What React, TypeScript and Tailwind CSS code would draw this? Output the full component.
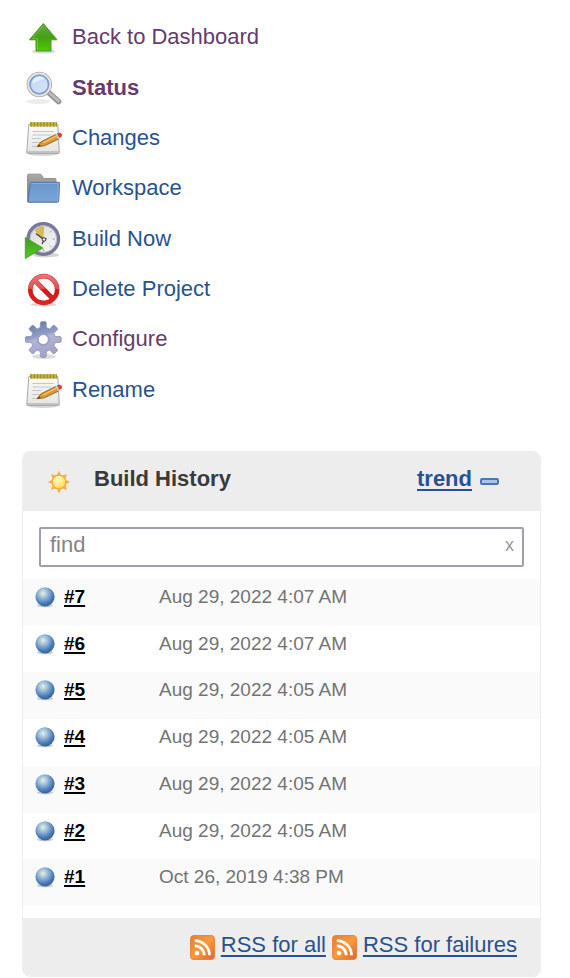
import type { ReactNode } from 'react';

function Icon({ children }: { children: ReactNode }) {
  return (
    <svg viewBox="0 0 38 38" className="size-[38px] shrink-0 overflow-visible" aria-hidden="true">
      {children}
    </svg>
  );
}

function UpIcon() {
  return (
    <Icon>
      <ellipse cx="19.5" cy="33.5" rx="12" ry="2" fill="#d9d9d9" />
      <path d="M19.3 5.5 33 21.8H27V33H12V21.8H5.5Z" fill="url(#up)" stroke="#4a9a1c" strokeWidth="1" strokeLinejoin="round" />
      <path d="M13.5 31.5V20.5H8.5L19.3 7.6" fill="none" stroke="#8fd05f" strokeWidth="1" opacity="0.5" />
    </Icon>
  );
}

function SearchIcon() {
  return (
    <Icon>
      <ellipse cx="14" cy="32.5" rx="12" ry="2.6" fill="#ececec" />
      <path d="m24 23 10.5 9.5" stroke="#929292" strokeWidth="5.6" strokeLinecap="round" />
      <path d="m26 24.5 8.5 7.5" stroke="#bdbdbd" strokeWidth="2.6" strokeLinecap="round" />
      <circle cx="15.3" cy="15.5" r="11" fill="url(#lens)" stroke="#a6a8a5" strokeWidth="3.4" />
      <circle cx="15.3" cy="15.5" r="11" fill="none" stroke="#e6e7e4" strokeWidth="1.8" />
      <circle cx="15.3" cy="15.5" r="9.2" fill="none" stroke="#7b9fd0" strokeWidth="1.5" />
      <path d="M8.5 15a7 7 0 0 1 12-5.2c-3 1-8.5 3-12 5.2Z" fill="#eef5fd" opacity="0.8" />
    </Icon>
  );
}

function NotepadIcon() {
  return (
    <Icon>
      <ellipse cx="19" cy="35.5" rx="14" ry="1.4" fill="#d6d6d6" />
      <path d="M4.8 5.5h29l1.5 28q0 1-1 1H3.7q-1 0-1-1Z" fill="url(#paper)" stroke="#a9a9a6" strokeWidth="1" />
      <path d="M3 33h32" stroke="#b4b4b2" strokeWidth="1.4" />
      <path d="M8.5 12.5h21M8.5 16h19M8 19.5h9M8 23.5h14M8 27.5h5" stroke="#c6c6c4" strokeWidth="1.2" />
      <path d="M6 5.4h27" stroke="#c5b047" strokeWidth="4.4" />
      <path d="M6.5 5.4H33" stroke="#a08e2c" strokeWidth="4.4" strokeDasharray="1.3 1.9" />
      <path d="m13 27.8 4-5L31.500 15.500l3 4.600-14 6.700Z" fill="#d99a35" stroke="#9a6519" strokeWidth="0.9" strokeLinejoin="round" />
      <path d="m19 24 13.500-7" stroke="#f3c673" strokeWidth="1.2" />
      <path d="m13 27.800 2-2.600 1.900 1.900Z" fill="#5c4526" />
      <path d="m31.300 15.700 1.700-.9 2.600 4.400-1.700.9Z" fill="#c9c9c9" />
      <path d="M32.800 14.300c2.200-1.200 4.500-.7 5.100.9.500 1.500-.2 2.900-2.400 3.900Z" fill="#dd4437" />
    </Icon>
  );
}

function FolderIcon() {
  return (
    <Icon>
      <path d="M3.500 33V6.500Q3.500 5.200 4.800 5.200h11.400q1 0 1.500 1l1.800 3.300h11.500q1 0 1 1V33Z" fill="url(#back)" stroke="#828282" strokeWidth="0.8" />
      <path d="M7.300 13.300h27.600q.8 0 .7 1L34.700 32q-.1 1.200-1.200 1.200H5q-1 0-.9-1.200L6.300 14.300q.1-1 1-1Z" fill="url(#folder)" stroke="#4d7ab2" strokeWidth="1" />
      <path d="M7.500 14.500h26.800l-.9 17.300" fill="none" stroke="#8fb1da" strokeWidth="0.9" />
    </Icon>
  );
}

function BuildIcon() {
  return (
    <Icon>
      <ellipse cx="22" cy="35" rx="13" ry="2.500" fill="#d5d5d5" />
      <circle cx="19.300" cy="19" r="15.200" fill="url(#clock)" stroke="#77779a" strokeWidth="3.400" />
      <circle cx="19.300" cy="19" r="13.300" fill="none" stroke="#bcbccb" strokeWidth="1" />
      <path d="M19.300 7v2.300M31 19h-2.300M27.600 10.700 26 12.300M27.600 27.300 26 25.700M19.300 31v-2.300" stroke="#9c9c9c" strokeWidth="1" />
      <path d="m19 18.500-8-8.300Q14.500 7 19.300 7Z" fill="#d9bc4c" stroke="#c0a94f" strokeWidth="0.700" />
      <path d="m12 13.500 7.500 5.800 3-.6M20 20l-2 4" fill="none" stroke="#3d3d3d" strokeWidth="1.300" />
      <circle cx="20" cy="19.500" r="1.800" fill="#eee" stroke="#333" />
      <path d="M1.300 17.500 18.800 28 1.300 38.500Z" fill="url(#play)" stroke="#459c20" strokeWidth="0.900" strokeLinejoin="round" />
    </Icon>
  );
}

function DeleteIcon() {
  return (
    <Icon>
      <ellipse cx="19.700" cy="34.500" rx="13" ry="1.800" fill="#d4d4d4" />
      <circle cx="19.700" cy="19.500" r="13.400" fill="#fff" stroke="#c93030" strokeWidth="4.600" />
      <path d="m10.500 10.300 18.400 18.400" stroke="#c93030" strokeWidth="4.800" />
      <circle cx="19.700" cy="19.500" r="13.400" fill="none" stroke="url(#stop)" strokeWidth="3.800" />
      <path d="m10.300 10.100 18.800 18.800" stroke="url(#stop)" strokeWidth="4" />
    </Icon>
  );
}

const gearPath = Array.from({ length: 8 }, (_, tooth) => {
  const points = [
    [-14, 12.3],
    [-10, 17],
    [-7, 18],
    [7, 18],
    [10, 17],
    [14, 12.3],
  ];
  return points
    .map(([offset, radius]) => {
      const angle = ((tooth * 45 + offset) * Math.PI) / 180;
      return `${(19.3 + radius * Math.sin(angle)).toFixed(2)} ${(19.5 - radius * Math.cos(angle)).toFixed(2)}`;
    })
    .join('L');
}).join('L');

function GearIcon() {
  return (
    <Icon>
      <ellipse cx="20" cy="36.500" rx="12" ry="2.400" fill="#dcdcdc" />
      <path
        d={`M${gearPath}ZM24.300 19.500a5 5 0 1 0-10 0a5 5 0 1 0 10 0Z`}
        fill="url(#gear)"
        fillRule="evenodd"
        stroke="#8a91b3"
        strokeWidth="0.800"
        strokeLinejoin="round"
      />
      <circle cx="19.300" cy="19.500" r="6" fill="none" stroke="#93a0c4" strokeWidth="1" />
    </Icon>
  );
}

function SunIcon() {
  const rays = [0, 45, 90, 135, 180, 225, 270, 315];
  return (
    <svg viewBox="0 0 24 24" className="size-6 shrink-0" aria-hidden="true">
      {rays.map((angle) => (
        <path key={angle} d="M12 .8 14.600 5.800H9.400Z" fill="#f9ae4b" transform={`rotate(${angle} 12 12)`} />
      ))}
      <circle cx="12" cy="12" r="6.800" fill="url(#sun)" stroke="#f5a840" strokeWidth="1.200" />
    </svg>
  );
}

function BallIcon() {
  return (
    <svg viewBox="0 0 22 22" className="size-[22px] shrink-0" role="img" aria-label="Success">
      <ellipse cx="11" cy="19.500" rx="8" ry="1.800" fill="#c9c9c9" />
      <circle cx="11" cy="10.800" r="9.600" fill="url(#ball)" />
    </svg>
  );
}

function RssIcon() {
  return (
    <svg viewBox="0 0 26 26" className="size-[25px] shrink-0" aria-hidden="true">
      <rect x="0.500" y="0.500" width="25" height="25" rx="3.500" fill="url(#rss)" stroke="#e5843e" />
      <circle cx="7.300" cy="18.800" r="2.400" fill="#fff" />
      <path d="M5 11.300a9.800 9.800 0 0 1 9.800 9.800M5 5.800a15.300 15.300 0 0 1 15.300 15.300" fill="none" stroke="#fff" strokeWidth="2.800" />
    </svg>
  );
}

function Gradients() {
  return (
    <svg className="absolute size-0" aria-hidden="true">
      <defs>
        <linearGradient id="up" x1="0" y1="0" x2="0" y2="1">
          <stop offset="0" stopColor="#6cab47" />
          <stop offset="0.500" stopColor="#42a014" />
          <stop offset="1" stopColor="#4fca0a" />
        </linearGradient>
        <linearGradient id="lens" x1="0" y1="0" x2="1" y2="1">
          <stop offset="0" stopColor="#bad3f1" />
          <stop offset="1" stopColor="#dce9f8" />
        </linearGradient>
        <linearGradient id="paper" x1="0" y1="0" x2="0" y2="1">
          <stop offset="0" stopColor="#fafafa" />
          <stop offset="1" stopColor="#e4e4e2" />
        </linearGradient>
        <linearGradient id="back" x1="0" y1="0" x2="0" y2="1">
          <stop offset="0" stopColor="#aaa" />
          <stop offset="1" stopColor="#707070" />
        </linearGradient>
        <linearGradient id="folder" x1="0" y1="0" x2="0" y2="1">
          <stop offset="0" stopColor="#6795cb" />
          <stop offset="1" stopColor="#7ba4d7" />
        </linearGradient>
        <linearGradient id="clock" x1="0" y1="0" x2="1" y2="1">
          <stop offset="0" stopColor="#d6d6d4" />
          <stop offset="1" stopColor="#fafafa" />
        </linearGradient>
        <linearGradient id="play" x1="0" y1="0" x2="0" y2="1">
          <stop offset="0" stopColor="#3d9e1d" />
          <stop offset="1" stopColor="#58c52b" />
        </linearGradient>
        <linearGradient id="stop" gradientUnits="userSpaceOnUse" x1="0" y1="4" x2="0" y2="34">
          <stop offset="0" stopColor="#ea7878" />
          <stop offset="0.480" stopColor="#e25050" />
          <stop offset="0.520" stopColor="#d41717" />
          <stop offset="1" stopColor="#da2424" />
        </linearGradient>
        <linearGradient id="gear" x1="0" y1="0" x2="0.300" y2="1">
          <stop offset="0" stopColor="#5b78a8" />
          <stop offset="0.450" stopColor="#8c9bc3" />
          <stop offset="0.550" stopColor="#b3b5d8" />
          <stop offset="1" stopColor="#a3a2c4" />
        </linearGradient>
        <radialGradient id="sun" cx="0.400" cy="0.350" r="0.700">
          <stop offset="0" stopColor="#fffbc4" />
          <stop offset="1" stopColor="#fcdb4b" />
        </radialGradient>
        <radialGradient id="ball" cx="0.400" cy="0.320" r="0.700">
          <stop offset="0" stopColor="#e6f0e6" />
          <stop offset="0.350" stopColor="#9bbbd6" />
          <stop offset="0.750" stopColor="#4a7bb8" />
          <stop offset="1" stopColor="#30609f" />
        </radialGradient>
        <linearGradient id="rss" x1="0" y1="0" x2="1" y2="1">
          <stop offset="0" stopColor="#e67c33" />
          <stop offset="0.500" stopColor="#f99a3c" />
          <stop offset="1" stopColor="#dc6530" />
        </linearGradient>
      </defs>
    </svg>
  );
}

const tasks = [
  { label: 'Back to Dashboard', icon: <UpIcon />, style: 'text-[#633c6d]' },
  { label: 'Status', icon: <SearchIcon />, style: 'font-bold text-[#633c6d]' },
  { label: 'Changes', icon: <NotepadIcon />, style: 'text-[#28528f]' },
  { label: 'Workspace', icon: <FolderIcon />, style: 'text-[#28528f]' },
  { label: 'Build Now', icon: <BuildIcon />, style: 'text-[#28528f]' },
  { label: 'Delete Project', icon: <DeleteIcon />, style: 'text-[#28528f]' },
  { label: 'Configure', icon: <GearIcon />, style: 'text-[#633c6d]' },
  { label: 'Rename', icon: <NotepadIcon />, style: 'text-[#28528f]' },
];

const builds = [
  { id: '#7', date: 'Aug 29, 2022 4:07 AM' },
  { id: '#6', date: 'Aug 29, 2022 4:07 AM' },
  { id: '#5', date: 'Aug 29, 2022 4:05 AM' },
  { id: '#4', date: 'Aug 29, 2022 4:05 AM' },
  { id: '#3', date: 'Aug 29, 2022 4:05 AM' },
  { id: '#2', date: 'Aug 29, 2022 4:05 AM' },
  { id: '#1', date: 'Oct 26, 2019 4:38 PM' },
];

export default function App() {
  return (
    <div className="min-h-screen bg-white pt-3 pr-[29px] pl-[22px] font-['Liberation_Sans',Arial,sans-serif] text-[22px] leading-7 text-[#3a3a3a]">
      <Gradients />
      <nav aria-label="Project">
        <ul className="grid h-[403px] auto-rows-fr">
          {tasks.map((task) => (
            <li key={task.label} className="flex items-center">
              <a href="#" className={`flex items-center gap-2.5 pl-0.5 ${task.style}`}>
                {task.icon}
                {task.label}
              </a>
            </li>
          ))}
        </ul>
      </nav>

      <section className="mt-9 overflow-hidden rounded-lg border border-[#ededed]">
        <header className="flex h-[59px] items-center bg-[#ededed] pr-[41px] pl-6">
          <SunIcon />
          <h2 className="ml-[23px] pb-1.5 font-bold">Build History</h2>
          <a href="#" className="ml-auto pb-1.5 font-bold text-[#28528f] underline decoration-2 underline-offset-[3px]">
            trend
          </a>
          <button type="button" aria-label="Collapse" className="ml-2 h-[7px] w-[19px] rounded-xs border-2 border-[#4a78b0] bg-[#a9c4e4]" />
        </header>

        <div className="px-4 pt-4 pb-3">
          <div className="flex h-10 items-center rounded-xs border-2 border-[#a0a0ac] pr-2 pb-1 pl-[9px]">
            <input
              type="text"
              aria-label="Find builds"
              placeholder="find"
              className="min-w-0 flex-1 outline-none placeholder:text-[#858585]"
            />
            <button type="button" aria-label="Clear" className="text-lg leading-7 text-[#999]">
              x
            </button>
          </div>
        </div>

        <table className="h-[327px] w-full text-[19px] leading-6">
          <tbody>
            {builds.map((build) => (
              <tr key={build.id} className="align-top odd:bg-[#fafafa]">
                <td className="w-[136px] pt-1.5 pl-[11px]">
                  <div className="flex items-center gap-2">
                    <BallIcon />
                    <a href="#" className="font-bold text-black underline decoration-2 underline-offset-2">
                      {build.id}
                    </a>
                  </div>
                </td>
                <td className="pt-1.5 text-[#737373]">{build.date}</td>
              </tr>
            ))}
          </tbody>
        </table>

        <footer className="mt-3 flex h-[58px] items-center justify-end gap-1.5 bg-[#ededed] pr-[23px] text-[#28528f]">
          <RssIcon />
          <a href="#" className="pb-1 underline decoration-2 underline-offset-[3px]">
            RSS for all
          </a>
          <RssIcon />
          <a href="#" className="pb-1 underline decoration-2 underline-offset-[3px]">
            RSS for failures
          </a>
        </footer>
      </section>
    </div>
  );
}
